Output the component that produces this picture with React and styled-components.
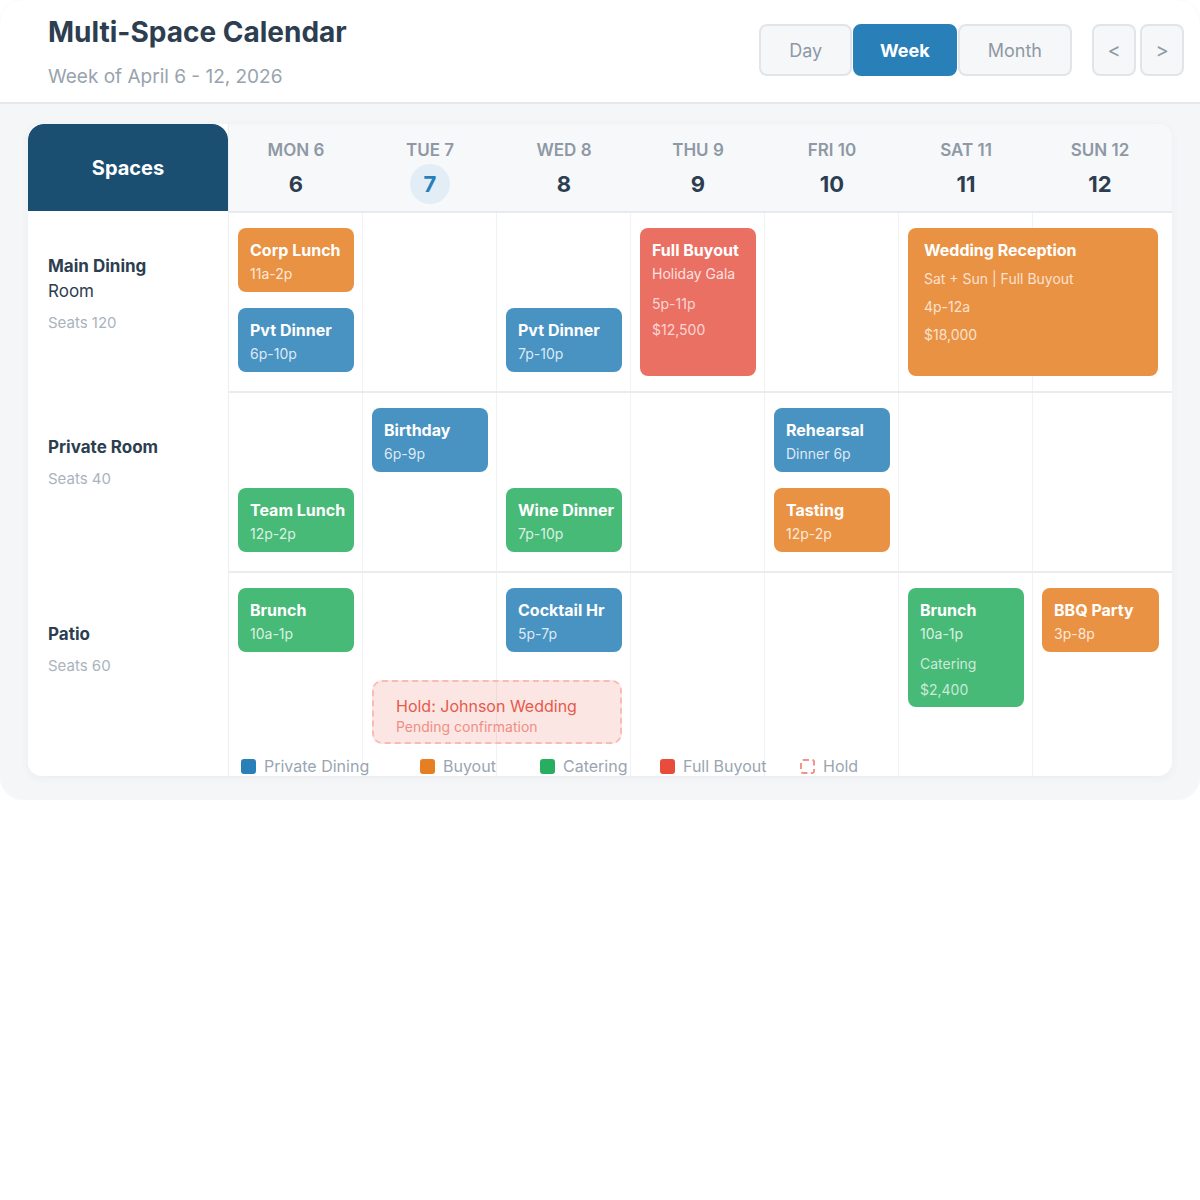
import styled, { createGlobalStyle } from 'styled-components'

const GlobalStyle = createGlobalStyle`
  * { box-sizing: border-box; }
  body {
    margin: 0;
    background: #ffffff;
    font-family: Inter, "Noto Sans", "Liberation Sans", sans-serif;
  }
`

const COLORS = {
  private: '#4993c3',
  buyout: '#ea9243',
  catering: '#48ba78',
  full: '#eb7064',
}

const days = [
  { label: 'MON 6', num: 6 },
  { label: 'TUE 7', num: 7, today: true },
  { label: 'WED 8', num: 8 },
  { label: 'THU 9', num: 9 },
  { label: 'FRI 10', num: 10 },
  { label: 'SAT 11', num: 11 },
  { label: 'SUN 12', num: 12 },
]

const spaces = [
  {
    name: 'Main Dining',
    rest: 'Room',
    seats: 'Seats 120',
    top: 43,
    cells: [
      [
        { title: 'Corp Lunch', sub: '11a-2p', kind: 'buyout' },
        { title: 'Pvt Dinner', sub: '6p-10p', kind: 'private' },
      ],
      [],
      [{ title: 'Pvt Dinner', sub: '7p-10p', kind: 'private', slot: 2 }],
      [{ title: 'Full Buyout', sub: 'Holiday Gala', meta: '5p-11p', price: '$12,500', kind: 'full', height: 148 }],
      [],
      [{ title: 'Wedding Reception', lines: ['Sat + Sun | Full Buyout', '4p-12a', '$18,000'], kind: 'buyout', span: 2, height: 148 }],
      [],
    ],
  },
  {
    name: 'Private Room',
    seats: 'Seats 40',
    top: 44,
    cells: [
      [{ title: 'Team Lunch', sub: '12p-2p', kind: 'catering', slot: 2 }],
      [{ title: 'Birthday', sub: '6p-9p', kind: 'private' }],
      [{ title: 'Wine Dinner', sub: '7p-10p', kind: 'catering', slot: 2 }],
      [],
      [
        { title: 'Rehearsal', sub: 'Dinner 6p', kind: 'private' },
        { title: 'Tasting', sub: '12p-2p', kind: 'buyout' },
      ],
      [],
      [],
    ],
  },
  {
    name: 'Patio',
    seats: 'Seats 60',
    top: 51,
    cells: [
      [{ title: 'Brunch', sub: '10a-1p', kind: 'catering' }],
      [{ hold: true, title: 'Hold: Johnson Wedding', sub: 'Pending confirmation' }],
      [{ title: 'Cocktail Hr', sub: '5p-7p', kind: 'private' }],
      [],
      [],
      [{ title: 'Brunch', sub: '10a-1p', meta: 'Catering', price: '$2,400', kind: 'catering' }],
      [{ title: 'BBQ Party', sub: '3p-8p', kind: 'buyout' }],
    ],
  },
]

const legend = [
  { label: 'Private Dining', color: '#2980b9' },
  { label: 'Buyout', color: '#e67e22' },
  { label: 'Catering', color: '#27ae60' },
  { label: 'Full Buyout', color: '#e74c3c' },
  { label: 'Hold', dashed: true },
]

export default function App() {
  return (
    <>
      <GlobalStyle />
      <Shell>
        <Header>
          <div>
            <Title>Multi-Space Calendar</Title>
            <Subtitle>Week of April 6 - 12, 2026</Subtitle>
          </div>
          <Controls>
            <Toggle>
              <ToggleButton>Day</ToggleButton>
              <ToggleButton $active>Week</ToggleButton>
              <ToggleButton>Month</ToggleButton>
            </Toggle>
            <NavGroup>
              <NavButton>&lt;</NavButton>
              <NavButton>&gt;</NavButton>
            </NavGroup>
          </Controls>
        </Header>

        <Body>
          <Card>
            <SpacesColumn>
              <SpacesHeader>Spaces</SpacesHeader>
              {spaces.map(s => (
                <SpaceItem key={s.name} $top={s.top}>
                  <SpaceName>{s.name}</SpaceName>
                  {s.rest && <SpaceNameRest>{s.rest}</SpaceNameRest>}
                  <Seats>{s.seats}</Seats>
                </SpaceItem>
              ))}
            </SpacesColumn>

            <DaysArea>
              <DayHeaderRow>
                {days.map(d => (
                  <DayHead key={d.label}>
                    <DayLabel>{d.label}</DayLabel>
                    <DayNum $today={d.today}>{d.num}</DayNum>
                  </DayHead>
                ))}
              </DayHeaderRow>

              {spaces.map(s => (
                <Row key={s.name}>
                  {s.cells.map((events, i) => (
                    <Cell key={i}>
                      {events.map(ev =>
                        ev.hold ? (
                          <HoldCard key={ev.title}>
                            <HoldTitle>{ev.title}</HoldTitle>
                            <HoldSub>{ev.sub}</HoldSub>
                          </HoldCard>
                        ) : (
                          <Event
                            key={ev.title + ev.sub}
                            $kind={ev.kind}
                            $slot={ev.slot}
                            $span={ev.span}
                            $height={ev.height}
                          >
                            <EventTitle>{ev.title}</EventTitle>
                            {ev.sub && <EventSub>{ev.sub}</EventSub>}
                            {ev.meta && <EventMeta>{ev.meta}</EventMeta>}
                            {ev.price && <EventPrice>{ev.price}</EventPrice>}
                            {ev.lines && ev.lines.map(l => <EventLine key={l}>{l}</EventLine>)}
                          </Event>
                        )
                      )}
                    </Cell>
                  ))}
                </Row>
              ))}
            </DaysArea>

            <Legend>
              {legend.map(l => (
                <LegendItem key={l.label}>
                  <Swatch $color={l.color} $dashed={l.dashed} />
                  {l.label}
                </LegendItem>
              ))}
            </Legend>
          </Card>
        </Body>
      </Shell>
    </>
  )
}

const Shell = styled.div`
  width: 1200px;
  background: #f5f6f8;
  border-radius: 24px;
  overflow: hidden;
  box-shadow: 0 0 0 1px rgba(0, 0, 0, 0.02);
`

const Header = styled.header`
  display: flex;
  justify-content: space-between;
  align-items: center;
  height: 104px;
  padding: 0 16px 0 48px;
  background: #ffffff;
  border-bottom: 2px solid #e6e8eb;
`

const Title = styled.h1`
  margin: 0;
  font-size: 28px;
  line-height: 34px;
  font-weight: 700;
  color: #2c3e50;
`

const Subtitle = styled.div`
  margin-top: 17px;
  font-size: 19px;
  line-height: 22px;
  color: #98a3ae;
`

const Controls = styled.div`
  display: flex;
  align-items: center;
  gap: 20px;
  margin-bottom: 2px;
`

const Toggle = styled.div`
  display: flex;
  gap: 1px;
`

const ToggleButton = styled.button`
  height: 52px;
  padding: 0 ${p => (p.$active ? 25 : 28)}px;
  border: 2px solid ${p => (p.$active ? '#2980b9' : '#e1e4e8')};
  border-radius: 8px;
  background: ${p => (p.$active ? '#2980b9' : '#f6f7f9')};
  color: ${p => (p.$active ? '#ffffff' : '#8e99a5')};
  font-family: inherit;
  font-size: 18px;
  font-weight: ${p => (p.$active ? 700 : 400)};
`

const NavGroup = styled.div`
  display: flex;
  gap: 4px;
`

const NavButton = styled.button`
  width: 44px;
  height: 52px;
  padding: 0;
  border: 2px solid #e1e4e8;
  border-radius: 8px;
  background: #f6f7f9;
  color: #8e99a5;
  font-family: inherit;
  font-size: 20px;
`

const Body = styled.main`
  padding: 20px 28px 24px;
`

const Card = styled.section`
  position: relative;
  display: flex;
  height: 652px;
  background: #ffffff;
  border-radius: 14px;
  overflow: hidden;
  box-shadow: 0 2px 10px rgba(30, 50, 80, 0.05);
`

const SpacesColumn = styled.div`
  width: 201px;
  flex-shrink: 0;
  border-right: 1px solid #eceef0;
  background: #ffffff;
`

const SpacesHeader = styled.div`
  display: flex;
  align-items: center;
  justify-content: center;
  height: 87px;
  background: #1b4f72;
  border-radius: 16px 16px 0 0;
  color: #ffffff;
  font-size: 20px;
  font-weight: 700;
`

const SpaceItem = styled.div`
  height: 180px;
  padding: ${p => p.$top}px 20px 0;
`

const SpaceName = styled.div`
  font-size: 17px;
  line-height: 25px;
  font-weight: 700;
  color: #2c3e50;
`

const SpaceNameRest = styled.div`
  font-size: 17px;
  line-height: 25px;
  color: #2c3e50;
`

const Seats = styled.div`
  margin-top: 9px;
  font-size: 15px;
  line-height: 20px;
  color: #aab3bd;
`

const DaysArea = styled.div`
  flex: 1;
  display: flex;
  flex-direction: column;
`

const DayHeaderRow = styled.div`
  display: flex;
  height: 89px;
  background: #f7f8fa;
  border-bottom: 2px solid #e8eaed;
`

const DayHead = styled.div`
  width: 134px;
  display: flex;
  flex-direction: column;
  align-items: center;
  padding-top: 16px;
`

const DayLabel = styled.div`
  font-size: 17px;
  line-height: 20px;
  font-weight: 600;
  color: #8e99a5;
`

const DayNum = styled.div`
  display: flex;
  align-items: center;
  justify-content: center;
  width: 40px;
  height: 40px;
  margin-top: 4px;
  border-radius: 50%;
  background: ${p => (p.$today ? '#e2edf5' : 'transparent')};
  color: ${p => (p.$today ? '#2980b9' : '#2c3e50')};
  font-size: 22px;
  font-weight: 700;
`

const Row = styled.div`
  display: flex;
  height: 180px;
  flex-shrink: 0;
  border-bottom: 2px solid #eaecee;
  &:last-child {
    flex: 1;
    border-bottom: none;
  }
`

const Cell = styled.div`
  width: 134px;
  display: flex;
  flex-direction: column;
  gap: 16px;
  padding: 15px 8px 0 9px;
  border-right: 1px solid #f1f2f4;
  &:last-child { border-right: none; }
`

const Event = styled.div`
  position: relative;
  flex-shrink: 0;
  width: ${p => (p.$span ? `${p.$span * 134 - 18}px` : '100%')};
  min-height: 64px;
  height: ${p => (p.$height ? `${p.$height}px` : 'auto')};
  margin-top: ${p => (p.$slot === 2 ? 80 : 0)}px;
  padding: ${p => (p.$span ? '12px 16px' : '12px 12px 8px')};
  border-radius: 8px;
  background: ${p => COLORS[p.$kind]};
  color: #ffffff;
`

const EventTitle = styled.div`
  font-size: 16px;
  line-height: 20px;
  font-weight: 700;
  white-space: nowrap;
`

const EventSub = styled.div`
  margin-top: 5px;
  font-size: 14px;
  line-height: 18px;
  color: rgba(255, 255, 255, 0.82);
`

const EventMeta = styled.div`
  margin-top: 12px;
  font-size: 14px;
  line-height: 18px;
  color: rgba(255, 255, 255, 0.72);
`

const EventPrice = styled.div`
  margin-top: 8px;
  font-size: 14px;
  line-height: 18px;
  color: rgba(255, 255, 255, 0.72);
`

const EventLine = styled.div`
  margin-top: 10px;
  font-size: 14px;
  line-height: 18px;
  color: rgba(255, 255, 255, 0.75);
`

const HoldCard = styled.div`
  position: relative;
  flex-shrink: 0;
  width: 250px;
  height: 64px;
  margin-top: 92px;
  padding: 14px 22px 0;
  border: 2px dashed #f6bcb5;
  border-radius: 10px;
  background: rgba(231, 76, 60, 0.14);
`

const HoldTitle = styled.div`
  font-size: 16px;
  line-height: 20px;
  color: #e55a4a;
  white-space: nowrap;
`

const HoldSub = styled.div`
  margin-top: 2px;
  font-size: 14px;
  line-height: 18px;
  color: #ef8e83;
`

const Legend = styled.div`
  position: absolute;
  left: 213px;
  bottom: 0;
  display: grid;
  grid-template-columns: 179px 120px 120px 140px auto;
  align-items: center;
`

const LegendItem = styled.div`
  display: flex;
  align-items: center;
  gap: 8px;
  font-size: 16px;
  line-height: 20px;
  color: #9aa5b1;
  white-space: nowrap;
`

const Swatch = styled.span`
  width: 15px;
  height: 15px;
  border-radius: 3px;
  background: ${p => (p.$dashed ? 'transparent' : p.$color)};
  border: ${p => (p.$dashed ? '2px dashed #f1948a' : 'none')};
`
